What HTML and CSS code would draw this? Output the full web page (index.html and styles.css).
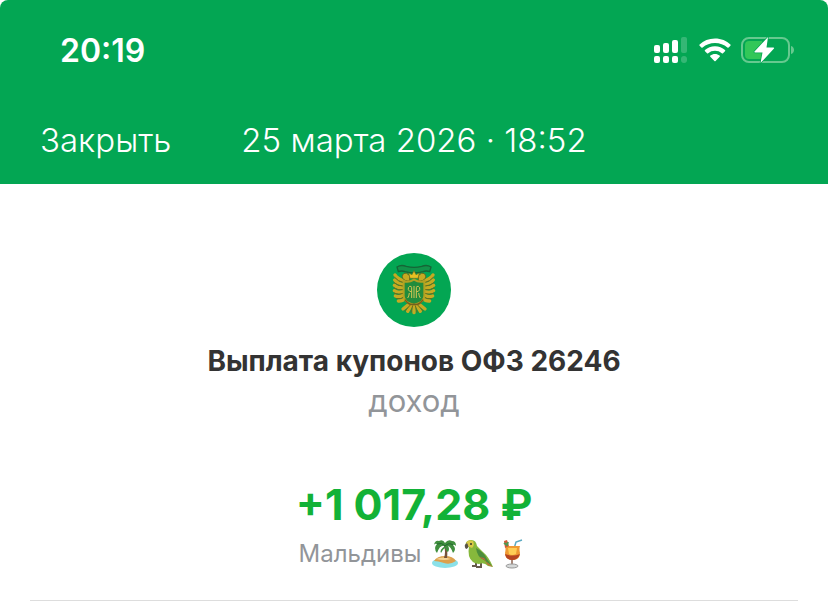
FILE: index.html
```html
<!DOCTYPE html>
<html lang="ru">
<head>
  <meta charset="UTF-8">
  <meta name="viewport" content="width=device-width, initial-scale=1.0">
  <title>Выплата купонов ОФЗ 26246</title>
  <link rel="stylesheet" href="styles.css">
</head>
<body>
  <header>
    <div class="status-bar">
      <span class="status-time">20:19</span>
      <div class="status-icons">
        <!-- Сигнал двух SIM-карт -->
        <svg class="icon-signal" width="33" height="26" viewBox="0 0 33 26" fill="#fff">
          <rect x="0" y="8" width="6" height="8" rx="2"/>
          <rect x="9" y="6" width="6" height="10" rx="2"/>
          <rect x="18" y="3" width="6" height="13" rx="2"/>
          <rect x="27" y="0" width="6" height="16" rx="2" opacity=".2"/>
          <rect x="0" y="19" width="6" height="7" rx="2"/>
          <rect x="9" y="19" width="6" height="7" rx="2"/>
          <rect x="18" y="19" width="6" height="7" rx="2"/>
          <rect x="27" y="19" width="6" height="7" rx="3" opacity=".2"/>
        </svg>
        <!-- Wi-Fi -->
        <svg class="icon-wifi" width="32" height="24" viewBox="0 0 32 24" fill="#fff">
          <path d="M16 0.5C22.2 .5 27.500 2.700 31.400 6.500Q32 7.100 31.400 7.700L29.600 9.500Q29 10 28.400 9.500C25 6.400 20.800 4.900 16 4.900S7 6.400 3.600 9.500Q3 10 2.400 9.500L.6 7.700Q0 7.100 .6 6.500C4.500 2.700 9.800 .5 16 .5Z"/>
          <path d="M16 8.300C19.900 8.300 23.400 9.700 26 12.100Q26.600 12.700 26 13.300L24 15.200Q23.400 15.700 22.800 15.200C20.900 13.500 18.600 12.700 16 12.700S11.100 13.500 9.200 15.200Q8.600 15.700 8 15.200L6 13.300Q5.400 12.700 6 12.100C8.600 9.700 12.100 8.300 16 8.300Z"/>
          <path d="M16 16C17.800 16 19.300 16.600 20.600 17.600Q21.300 18.200 20.700 18.800L16.600 23Q16 23.500 15.400 23L11.300 18.800Q10.700 18.200 11.400 17.600C12.700 16.600 14.200 16 16 16Z"/>
        </svg>
        <!-- Батарея на зарядке -->
        <svg class="icon-battery" width="53" height="26" viewBox="0 0 53 26">
          <rect x="1" y="1" width="47" height="24" rx="7" fill="none" stroke="#66c98f" stroke-width="2"/>
          <path d="M50 9C54 10 54 16 50 17Z" fill="#66c98f"/>
          <path d="M8 4H21V22H8Q4 22 4 18V8Q4 4 8 4Z" fill="#32c759"/>
          <path d="M27 0L13.500 14.500Q13 15.500 14 15.500H21.500L19.500 26L33 11.500Q33.500 10.500 32.500 10.500H25.500Z" fill="#fff" stroke="#03a653" stroke-width="1.500" paint-order="stroke"/>
        </svg>
      </div>
    </div>

    <nav class="nav-bar">
      <button type="button" class="close-button">Закрыть</button>
      <h1 class="nav-title">25 марта 2026 · 18:52</h1>
    </nav>
  </header>

  <main>
    <!-- Герб на зелёном круге -->
    <svg class="emblem" width="74" height="74" viewBox="0 0 222 222">
      <circle cx="111" cy="111" r="111" fill="#03a653"/>
      <path d="M60 42Q72 34 88 40Q111 46 134 40Q150 34 162 42L158 56Q148 52 138 56Q111 64 84 56Q74 52 64 56Z" fill="#12934a" stroke="#156536" stroke-width="4"/>
      <g fill="none" stroke="#c6aa22" stroke-width="10" stroke-linecap="round">
        <path d="M80 84Q62 78 54 66"/>
        <path d="M78 94Q62 92 53 81"/>
        <path d="M78 105Q62 106 52 97"/>
        <path d="M78 116Q62 120 52 113"/>
        <path d="M80 126Q66 134 55 129"/>
        <path d="M84 136Q76 145 64 144"/>
        <path d="M142 84Q160 78 168 66"/>
        <path d="M144 94Q160 92 169 81"/>
        <path d="M144 105Q160 106 170 97"/>
        <path d="M144 116Q160 120 170 113"/>
        <path d="M142 126Q156 134 167 129"/>
        <path d="M138 136Q146 145 158 144"/>
        <path d="M98 152L78 168"/>
        <path d="M104 154L92 175"/>
        <path d="M111 154V179"/>
        <path d="M118 154L130 175"/>
        <path d="M124 152L144 168"/>
      </g>
      <g fill="none" stroke="#6d6a1c" stroke-width="3" stroke-linecap="round">
        <path d="M80 89Q62 85 53 73M79 99Q62 99 51 89M79 110Q62 113 51 105M80 121Q64 127 52 121M84 131Q72 140 58 137"/>
        <path d="M142 89Q160 85 169 73M143 99Q160 99 171 89M143 110Q160 113 171 105M142 121Q158 127 170 121M138 131Q150 140 164 137"/>
        <path d="M100 156L84 174M107 158L102 178M115 158L120 178M122 156L138 174"/>
      </g>
      <path d="M92 84Q76 82 76 70Q78 59 89 61L98 68V84ZM130 84Q146 82 146 70Q144 59 133 61L124 68V84Z" fill="#c6aa22" stroke="#6d6a1c" stroke-width="3"/>
      <path d="M99 76L95 60L105 65L111 53L117 65L127 60L123 76Z" fill="#e8c022" stroke="#6b711e" stroke-width="2"/>
      <path d="M80 84Q94 90 111 80Q128 90 142 84V128Q142 148 111 155Q80 148 80 128Z" fill="#218c3c" stroke="#b2a122" stroke-width="6"/>
      <path d="M111 99V135M104 135V104Q104 99 98 100Q92 103 94 110Q97 117 104 116M118 135V104Q118 99 124 100Q130 103 128 110Q125 117 118 116M92 135Q96 130 97 120M130 135Q126 130 125 120" fill="none" stroke="#d4c454" stroke-width="3"/>
      <path d="M84 140Q94 157 111 154Q128 157 138 140" fill="none" stroke="#755f1c" stroke-width="5"/>
    </svg>
    <h2 class="payment-title">Выплата купонов ОФЗ 26246</h2>
    <p class="payment-type">доход</p>

    <p class="amount">+1 017,28 ₽</p>
    <div class="account">
      <span>Мальдивы</span>
      <div class="account-icons">
        <!-- Остров -->
        <svg width="32" height="30" viewBox="0 0 28 30">
          <ellipse cx="14" cy="24" rx="13" ry="5" fill="#8be1e9"/>
          <path d="M3 22Q6 17 14 17T25 22Q19 26 13 24T3 22Z" fill="#dda04c"/>
          <path d="M5 20Q12 17 20 20Q13 22 5 20Z" fill="#f5d596"/>
          <path d="M13 7Q15 13 13 19H16Q17 12 15 7Z" fill="#76533a"/>
          <path d="M14 7Q9 5 6 14Q2 9 6 5Q4 4 3 6Q4 1 8 2Q12 0 14 4Q17 0 21 2Q25 2 25 7Q23 5 22 6Q26 10 22 14Q20 8 17 7Q19 10 17 13Q15 12 14 9Q12 10 10 14Q8 11 14 7Z" fill="#408f3e"/>
          <path d="M6 5Q11 3 14 7Q18 3 22 6" fill="none" stroke="#22662e"/>
        </svg>
        <!-- Попугай -->
        <svg width="32" height="30" viewBox="0 0 30 30">
          <path d="M12 22V27H8M17 24V28H12" fill="none" stroke="#665b4d" stroke-width="2"/>
          <path d="M2 9Q0 2 6 1Q12 0 13 7L19 13Q25 18 29 28L24 27Q20 23 15 25Q7 24 5 17Q4 12 5 8Z" fill="#86b83c"/>
          <path d="M2 4Q4 0 9 2Q11 6 8 9L3 7Z" fill="#d9c948"/>
          <path d="M3 4Q-1 6 2 10Q5 9 4 6Z" fill="#59534a"/>
          <circle cx="7" cy="5" r="1" fill="#34372d"/>
          <path d="M12 9Q20 13 23 20L28 27L20 21Q13 18 12 9Z" fill="#4c8d3b"/>
          <path d="M15 18L22 22L20 19ZM21 22L29 28L24 26Z" fill="#c9603a"/>
        </svg>
        <!-- Коктейль -->
        <svg width="32" height="30" viewBox="0 0 20 30">
          <path d="M10 13L13 3L19 1" fill="none" stroke="#5caac2" stroke-width="1.500"/>
          <path d="M2 7H17Q16 10 17 14Q17 20 11 21H8Q2 20 2 14Q3 10 2 7Z" fill="#ef9a32"/>
          <path d="M2 15Q9 18 17 15Q15 21 9 21Q3 21 2 15Z" fill="#b64522"/>
          <path d="M5 9H14L13 15Q9 17 6 15Z" fill="#ffce55"/>
          <path d="M1 2L4 1L6 7L2 9Z" fill="#d25a38"/>
          <path d="M1 4L4 6L5 3" fill="none" stroke="#4f9752" stroke-width="2"/>
          <path d="M9 21V26" stroke="#a98a7c" stroke-width="2"/>
          <ellipse cx="9" cy="27" rx="6" ry="2" fill="#d5d8d8" stroke="#999" stroke-width="1"/>
        </svg>
      </div>
    </div>
    <hr>
  </main>
</body>
</html>
```
FILE: styles.css
```css
/* Общие стили */
* {
  margin: 0;
  padding: 0;
  box-sizing: border-box;
}

body {
  background-color: #fff;
  color: #333;
  font-family: Inter, "Liberation Sans", sans-serif;
}

/* Шапка */
header {
  background-color: #03a653;
  color: #fff;
  border-radius: 8px 8px 0 0;
  padding: 30px 34px 22px 40px;
}

.status-bar {
  display: flex;
  align-items: center;
  justify-content: space-between;
  height: 40px;
  padding-left: 20px;
}

.status-time {
  font-size: 32px;
  font-weight: 600;
}

.status-icons {
  display: flex;
  align-items: center;
  gap: 12px;
}

.icon-battery {
  margin-left: -2px;
}

.nav-bar {
  display: grid;
  grid-template-columns: 1fr auto 1fr;
  align-items: center;
  margin-top: 48px;
  padding-right: 6px;
  line-height: 44px;
}

.close-button {
  justify-self: start;
  background: none;
  border: none;
  color: inherit;
  font: inherit;
  font-size: 33px;
  font-weight: 350;
  cursor: pointer;
}

.nav-title {
  font-size: 33px;
  font-weight: 350;
}

/* Операция */
main {
  display: flex;
  flex-direction: column;
  align-items: center;
  padding: 69px 30px 0;
  text-align: center;
}

.payment-title {
  margin-top: 14px;
  font-size: 28px;
  font-weight: 700;
  line-height: 40px;
}

.payment-type {
  color: #929599;
  font-size: 31px;
  line-height: 40px;
}

.amount {
  margin-top: 56px;
  color: #12b237;
  font-size: 43px;
  font-weight: 700;
  line-height: 54px;
}

.account {
  display: flex;
  align-items: center;
  gap: 8px;
  color: #929599;
  font-size: 24px;
  line-height: 46px;
}

.account-icons {
  display: flex;
  gap: 2px;
}

hr {
  width: 100%;
  margin-top: 23px;
  border: none;
  border-top: 1px solid #ddd;
}
```
